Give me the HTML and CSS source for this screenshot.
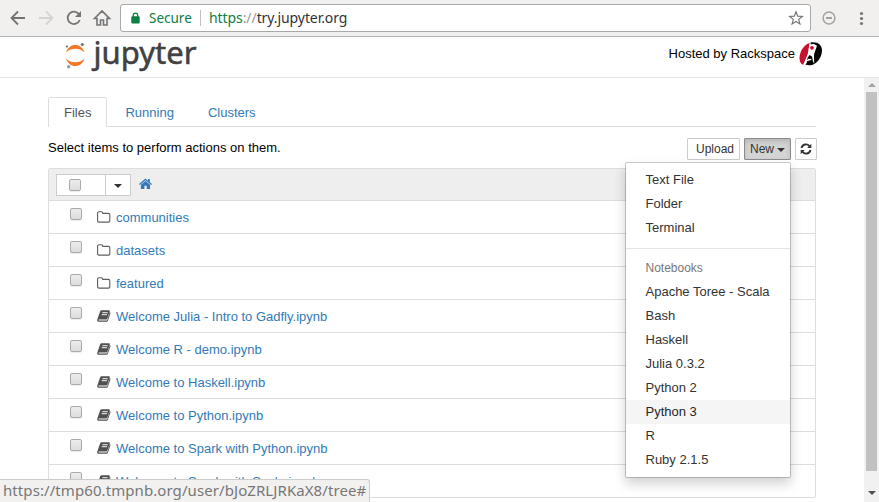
FILE: index.html
```html
<!DOCTYPE html>
<html lang="en">
<head>
<meta charset="utf-8">
<title>Home</title>
<link rel="stylesheet" href="styles.css">
</head>
<body>
<svg class="defs" width="0" height="0">
  <symbol id="folder" viewBox="0 0 14 12"><path d="M.6 9.800V2C.6 1.200 1.200.7 2 .7h2.500c.8 0 1.200.5 1.200 1.200v.5h5.800c.8 0 1.300.5 1.300 1.300v6.100c0 .8-.5 1.300-1.300 1.300H2c-.8 0-1.400-.5-1.400-1.300z" fill="none" stroke="#5e5e5e" stroke-width="1.100"/></symbol>
  <symbol id="book" viewBox="0 0 14 12"><path d="M4.800.2h6.900c.9 0 1.300.6 1 1.500l-2.300 6.800c-.3.800-.8 1.100-1.600 1.100H1.900c-.7 0-.7 1 0 1h7.400c.6 0 .9-.2 1.100-.8L12.900 2c.5.300.7.800.5 1.400l-2.400 7c-.3.800-.9 1.300-1.700 1.300H1.800C.5 11.700-.1 10.600.3 9.500L3.100 1.500C3.400.6 4 .2 4.800.2z" fill="#505050"/><path d="M5.400 2.700h5.300M4.700 4.700H10" stroke="#fff" stroke-width=".95"/></symbol>
</svg>
<div class="window">
  <header class="toolbar">
    <svg class="nav" width="120" height="36" fill="none" stroke="#737373" stroke-width="1.800">
      <path d="M25 18H12M18 11.500 11.500 18l6.500 6.500"/>
      <path d="M39 18h13M46 11.500l6.500 6.500-6.500 6.500" stroke="#d4d4d4"/>
      <path d="M79 14.300A6.200 6.200 0 1 0 79.700 20"/><path d="M81 11v6h-6z" fill="#737373" stroke="none"/>
      <path d="M94.500 18.500 102 11l7.500 7.500H107V25h-3.500v-5h-3v5H97v-6.500z" stroke-width="1.600"/>
    </svg>
    <div class="address">
      <svg class="lock" width="9" height="12" viewBox="0 0 9 12"><path d="M2.300 5V3.300a2.200 2.200 0 0 1 4.400 0V5" fill="none" stroke="#0b8043" stroke-width="1.300"/><rect x=".3" y="4.300" width="8.400" height="7.200" rx="1" fill="#0b8043"/></svg>
      <span class="secure">Secure</span>
      <i class="split"></i>
      <span class="url"><b>https</b><em>://</em>try.jupyter.org</span>
      <svg class="star" width="16" height="16" viewBox="0 0 16 16"><path d="m8 1.800 1.700 4.400 4.600.3-3.600 2.900 1.200 4.500L8 11.400l-3.900 2.500 1.200-4.500-3.600-2.900 4.600-.3z" fill="none" stroke="#777" stroke-width="1.200"/></svg>
    </div>
    <svg width="68" height="36"><circle cx="18" cy="18" r="5.900" fill="none" stroke="#a2a2a2" stroke-width="1.500"/><path d="M15 18h6" stroke="#999" stroke-width="1.800"/><g fill="#757575"><circle cx="50.500" cy="13.500" r="1.600"/><circle cx="50.500" cy="18.500" r="1.600"/><circle cx="50.500" cy="23.500" r="1.600"/></g></svg>
  </header>
  <div class="brandbar">
    <svg class="logo" width="136" height="40">
      <path d="M2.800 15.500C5 10.500 8 8 12.300 8s7.400 2.500 9.500 7.500C19 12.800 15.700 11.700 12.300 11.700S5.600 12.800 2.800 15.500zM2.800 21.500c2.200 5 5.200 7.500 9.500 7.500s7.400-2.500 9.500-7.500c-2.800 2.700-6.100 3.800-9.500 3.800s-6.700-1.100-9.500-3.800z" fill="#f37726"/>
      <circle cx="4" cy="9.500" r="1.100" fill="#666"/><circle cx="19.300" cy="7.500" r="1.500" fill="#707070"/><circle cx="5.700" cy="29.700" r="1.700" fill="#999"/>
      <text x="30.500" y="26.500" textLength="103" lengthAdjust="spacingAndGlyphs">jupyter</text>
    </svg>
    <div class="host"><span>Hosted by Rackspace</span>
      <svg width="24" height="26" viewBox="0 0 24 26"><path d="M10.500 2C4 4 0 12 .6 18.500c.3 3 1.600 4.800 3.600 5.200L8.800 13l2-2.500-1-3z" fill="#c4122f"/><path d="M11.500 1.500C18 .3 23.300 3.500 23 9.800 22.700 17 17.500 23.700 11.500 24.200c-2 .2-4-.2-5.500-1L9.500 17l2 1.800 2.500 4.400 1.200-10.700 2.800-7.800-3.200-1.800-3 .5z" fill="#050505"/><path d="M10.500 5c1-1.700 5-2 6-.5l-.8 4.500-.9 5 .5 9-3.200-6-1.900.9-3.400 5.600-1-.5L8.800 13 9.500 8z" fill="#fff"/><path d="m8.500 17 2-3 2.500 1.500 1.500 7.500-3 1h-4z" fill="#050505"/><path d="m7 20.500 2.700-3 1 .8 1.300-.8.500 1.500-2 .5z" fill="#fff"/><circle cx="13" cy="6.800" r="1.900" fill="#c4122f"/></svg>
    </div>
  </div>
  <div class="viewport">
    <main class="content">
      <nav class="tabs"><a class="tab active">Files</a><a class="tab">Running</a><a class="tab">Clusters</a></nav>
      <div class="actions">
        <p>Select items to perform actions on them.</p>
        <div class="btn upload">Upload</div>
        <div class="btn new">New<i class="caret"></i>
          <div class="menu">
            <a>Text File</a><a>Folder</a><a>Terminal</a>
            <hr>
            <a class="label">Notebooks</a><a>Apache Toree - Scala</a><a>Bash</a><a>Haskell</a><a>Julia 0.3.2</a><a>Python 2</a><a class="hover">Python 3</a><a>R</a><a>Ruby 2.1.5</a>
          </div>
        </div>
        <div class="btn refresh"><svg width="12" height="12" viewBox="0 0 12 12"><path d="M1.500 5A4.500 4.500 0 0 1 9.500 3.200M10.500 7A4.500 4.500 0 0 1 2.500 8.800" fill="none" stroke="#333" stroke-width="1.900"/><path d="M11.300.8v4.100H7.200zM.7 11.200V7.100h4.100z" fill="#333"/></svg></div>
      </div>
      <div class="list">
        <div class="head">
          <div class="select"><span class="all"><i class="check"></i></span><span class="drop"><i class="caret"></i></span></div>
          <svg width="13" height="12" viewBox="0 0 13 12"><path d="M6.500.6 9 2.700V1h1.800v3.200L13 6.100l-.8 1-5.700-4.800L.8 7.100 0 6.100z" fill="#337ab7"/><path d="m6.500 2.900 4.600 3.900V11H7.700V7.800H5.400V11H1.900V6.800z" fill="#337ab7"/></svg>
        </div>
        <div class="row"><i class="check"></i><svg><use href="#folder"/></svg><a>communities</a></div>
        <div class="row"><i class="check"></i><svg><use href="#folder"/></svg><a>datasets</a></div>
        <div class="row"><i class="check"></i><svg><use href="#folder"/></svg><a>featured</a></div>
        <div class="row"><i class="check"></i><svg><use href="#book"/></svg><a>Welcome Julia - Intro to Gadfly.ipynb</a></div>
        <div class="row"><i class="check"></i><svg><use href="#book"/></svg><a>Welcome R - demo.ipynb</a></div>
        <div class="row"><i class="check"></i><svg><use href="#book"/></svg><a>Welcome to Haskell.ipynb</a></div>
        <div class="row"><i class="check"></i><svg><use href="#book"/></svg><a>Welcome to Python.ipynb</a></div>
        <div class="row"><i class="check"></i><svg><use href="#book"/></svg><a>Welcome to Spark with Python.ipynb</a></div>
        <div class="row"><i class="check"></i><svg><use href="#book"/></svg><a>Welcome to Spark with Scala.ipynb</a></div>
      </div>
    </main>
    <div class="scrollbar"><i class="up"></i><i class="thumb"></i><i class="down"></i></div>
  </div>
  <div class="status"><span>https://tmp60.tmpnb.org/user/bJoZRLJRKaX8/tree#</span></div>
</div>
</body>
</html>
```
FILE: styles.css
```css
* { box-sizing: border-box; }
body { margin: 0; font: 13px/20px "Liberation Sans", Arial, sans-serif; color: #000; background: #fff; }
svg { display: block; flex: none; }
.defs { position: absolute; }
.window { position: relative; height: 502px; display: flex; flex-direction: column; overflow: hidden; }
.toolbar { height: 37px; flex: none; display: flex; background: #f1f0ef; border-bottom: 1px solid #b4b3b8; }
.address { flex: 1; height: 28px; margin-top: 4px; border: 1px solid #a9a9a9; border-radius: 3px; background: #fff; display: flex; align-items: center; font: 14px/26px "Noto Sans", sans-serif; color: #333; }
.lock { margin-left: 10px; }
.secure { width: 43px; margin-left: 9px; color: #0b8043; font-size: 13.5px; white-space: nowrap; }
.split { width: 1px; height: 16px; margin: 0 8px; background: #c0c0c0; }
.url { flex: 1; letter-spacing: -.08px; }
.url b { font-weight: 400; color: #0b8043; }
.url em { font-style: normal; color: #999; }
.star { margin-right: 6px; }
.brandbar { height: 41px; flex: none; border-bottom: 1px solid #e7e7e7; display: flex; justify-content: space-between; padding: 0 56px 0 63px; }
.logo { overflow: visible; }
.logo text { font: 30px "Noto Sans", sans-serif; fill: #414042; stroke: #414042; stroke-width: .5px; }
.host { display: flex; gap: 4px; padding-top: 4px; line-height: 26px; }
.viewport { flex: 1; min-height: 0; display: flex; }
.content { flex: 1; padding: 19px 48px 0; }
.tabs { display: flex; gap: 2px; height: 30px; border-bottom: 1px solid #ddd; }
.tab { height: 30px; padding: 5px 15px 0; border: 1px solid transparent; border-bottom: 0; color: #337ab7; line-height: 20px; }
.tab.active { color: #555; background: #fff; border-color: #ddd; border-radius: 2px 2px 0 0; }
.actions { height: 41px; display: flex; padding-top: 11px; margin-right: -1px; }
.actions p { flex: 1; margin: 0; }
.btn { position: relative; height: 22px; border: 1px solid #ccc; border-radius: 1px; background: #fff; color: #333; font-size: 12px; line-height: 20px; }
.upload { width: 53px; padding-left: 8px; }
.new { width: 47px; margin: 0 4px; padding-left: 5px; background: #d4d4d4; border-color: #8c8c8c; box-shadow: inset 0 3px 5px rgba(0,0,0,.125); display: flex; }
.refresh { width: 22px; padding: 4px; }
.caret { width: 0; height: 0; border: 4px solid transparent; border-top-color: #333; border-bottom: 0; }
.new > .caret { margin: 9px 0 0 3px; }
.menu { position: absolute; z-index: 2; top: 23px; right: -1px; width: 166px; padding: 5px 0; background: #fff; border: 1px solid rgba(0,0,0,.2); border-radius: 2px; box-shadow: 0 6px 12px rgba(0,0,0,.175); background-clip: padding-box; font-size: 13px; }
.menu a { display: block; height: 24px; padding: 2px 20px 2px 19.5px; line-height: 20px; color: #333; white-space: nowrap; }
.menu hr { height: 1px; margin: 8px 0 7px; border: 0; background: #e5e5e5; }
.menu .label { font-size: 12px; color: #777; }
.menu .hover { background: #f5f5f5; color: #262626; }
.list { border: 1px solid #ddd; border-radius: 2px; }
.head { height: 32px; display: flex; background: #eee; border-bottom: 1px solid #ddd; padding: 5px 7px; }
.head > svg { margin: 4px 0 0 8px; }
.select { display: flex; width: 75px; height: 22px; border: 1px solid #ccc; background: #fff; }
.all { width: 49px; padding: 4px 0 0 12px; border-right: 1px solid #ccc; }
.drop { padding: 9px 0 0 8px; }
.drop .caret { display: block; }
.check { display: block; flex: none; width: 12px; height: 12px; border: 1px solid #aaa; border-radius: 2px; background: linear-gradient(#ededed, #dcdcdc); box-shadow: 0 1px 1px rgba(0,0,0,.08); }
.row { height: 33px; display: flex; padding-left: 21px; border-bottom: 1px solid #ddd; }
.row:last-child { border-bottom: 0; height: 32px; }
.row .check { margin-top: 7px; }
.row svg { width: 14px; height: 12px; margin: 9.5px 5px 0 15px; }
.row a { padding-top: 7px; line-height: 20px; color: #337ab7; white-space: nowrap; }
.scrollbar { width: 15px; background: #f1f1f1; display: flex; flex-direction: column; align-items: center; }
.up, .down { width: 0; height: 0; border: 4px solid transparent; }
.up { margin-top: 5px; border-top: 0; border-bottom-color: #a3a3a3; }
.thumb { width: 11px; height: 379px; margin: 5px 0 0; background: #c1c1c1; }
.down { margin-top: 20px; border-bottom: 0; border-top-color: #505050; }
.status { position: absolute; z-index: 3; left: 0; bottom: 0; width: 370px; height: 23px; padding-left: 3px; background: #f2f1f0; border: 1px solid #ccc; border-width: 1px 1px 0 0; border-radius: 0 3px 0 0; font: 15px/20px "Noto Sans", sans-serif; color: #777; white-space: nowrap; }
.status span { letter-spacing: .08px; }
```
